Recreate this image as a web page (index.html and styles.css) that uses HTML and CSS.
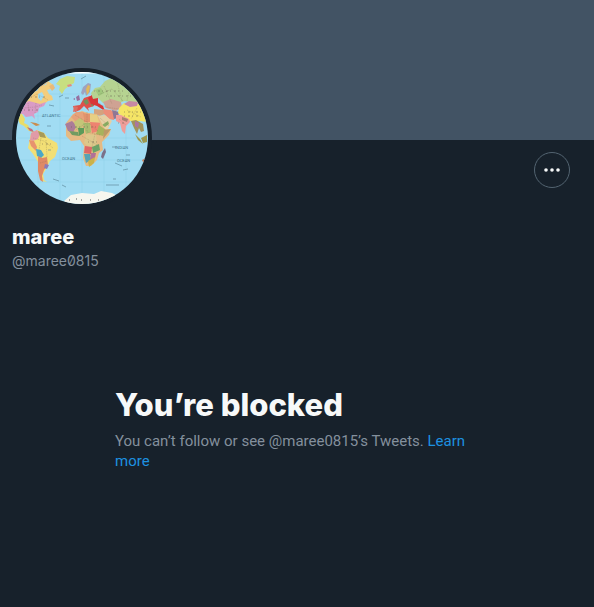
FILE: index.html
```html
<!DOCTYPE html>
<html lang="en">
  <head>
    <meta charset="UTF-8" />
    <meta name="viewport" content="width=device-width, initial-scale=1.0" />
    <title>maree (@maree0815)</title>
    <link rel="stylesheet" href="styles.css">
  </head>
  <body>
    <div class="banner"></div>

    <header class="profile">
      <div class="profile-top">
        <div class="avatar">
          <svg viewBox="0 0 132 132" role="img" aria-label="World map">
            <rect width="132" height="132" fill="#a1dcf3" />
            <!-- ocean grid -->
            <path d="M0 22H132M0 44H132M0 66H132M0 88H132M0 110H132M22 0V132M44 0V132M66 0V132M88 0V132M110 0V132" stroke="#8ccbe6" stroke-width=".4" fill="none" />
            <path d="M34 0H98" stroke="#fff" stroke-width="3" />
            <!-- north america -->
            <path d="M10 27l6-7 5-1 3-5 6-1 2-4 4 3-1 5-4 1 2 4 3 2 1 4-5 1-5 4-5 1-12-2z" fill="#f3cd7d" />
            <path d="M23 12l6-5 5-1-3 5-6 4zM33 14l4-2 2 4-3 3z" fill="#e9b978" />
            <path d="M22 22l4-2 2 4-3 5-3-3z" fill="#a1dcf3" />
            <path d="M6 32l7-3 11 3 6-2-2 4-5 2-1 4-4 2 1 5-3-3-6 1-3-3-5 1z" fill="#d99bc6" />
            <path d="M2 41l4 1 3 5-1 4 4 2 2 4 4 3-5-1-5-5-4-2-3-7z" fill="#e9dc68" />
            <path d="M11 55l5 2 2 3-4-1z" fill="#bf6e7d" />
            <path d="M14 50l6 1 4 2-4 1zM24 54l4 1" fill="#c98c4e" />
            <path d="M40 12l4-5 7-3 8 1-1 6-5 3-4 3-3 5-3-4 1-4z" fill="#c8df80" />
            <path d="M51 13l4-1 1 2-4 1z" fill="#df8c83" />
            <!-- south america -->
            <path d="M15 61l6-3 7 3 4 5 9 5 1 5-3 9-5 4-4 8-3 5 1 6 3 2-5-1-3-7-1-12-5-8-5-6z" fill="#f2df75" />
            <path d="M15 61l6-3 3 4-2 5-5 2-3-1z" fill="#e19aa7" />
            <path d="M22 59l6 2 2 5-6-1z" fill="#a79a59" />
            <path d="M13 68l5 1 3 6-1 4-5-5z" fill="#e7936e" />
            <path d="M20 77l5 1 3 5-3 3-4-2z" fill="#4ba7c6" />
            <path d="M22 84l4 2 5-1 1 8-4 5-2 6 1 6-3-2-2-9z" fill="#df8965" />
            <path d="M29 92l4 1-2 4-3-1z" fill="#8b79b4" />
            <!-- europe -->
            <path d="M57 34l7-1 4-7 6-2 5 3-1 7-6 2 1 3-5-5-4 4-5 2z" fill="#dd514b" />
            <path d="M58 34l4 1-1 4-4 1z" fill="#db6e65" />
            <path d="M60 25l3-2 1 5-3 1zM57 27l2-1v2z" fill="#9670a0" />
            <path d="M65 21l2-6 5-4 3 1-1 8-4 4-1-4-2 3z" fill="#9fa3be" />
            <path d="M70 17l2-4 2 1-1 6-2 3z" fill="#e0b85c" />
            <path d="M67 29l4-2 2 4-3 2zM74 29l5 1-3 5z" fill="#70915d" />
            <path d="M72 26l5-4 5 2v7l5 3 2 5-8-5-6-2z" fill="#d93437" />
            <!-- asia -->
            <path d="M75 21l4-5 5-1 5-6 9-4 9 5 10 7 9 9-3 6-14-3-7 2-10-2-5 2-5-5-5 1z" fill="#b6d391" />
            <path d="M79 18l6-2 3 5-5 3z" fill="#9fc87d" />
            <path d="M87 30l8-3 10 3 1 5-6 4-10-3z" fill="#cfa293" />
            <path d="M78 37l9 1 4 3-7 3-6-2z" fill="#d4a27e" />
            <path d="M87 37l8 1 4 3-1 7-5-1-5-5z" fill="#ec8e79" />
            <path d="M96 38l7 2-1 6-4 1z" fill="#8f7795" />
            <path d="M103 36l5-5 12 2 6-3 6 5v15l-9-1-10 0-7-5-4-3z" fill="#f5e566" />
            <path d="M108 32l5-3 9 1-1 4-7 1z" fill="#c789a4" />
            <path d="M82 44l7-1 7 6-4 8-5 2-4-8z" fill="#e6d0a3" />
            <path d="M86 53l6-4 1 3-4 3z" fill="#89ac62" />
            <path d="M100 43l5 0 8 4 1 3-4 4-1 8-3-3-2-8-4-2z" fill="#ef9d99" />
            <path d="M106 45l6 2-1 3-5-2z" fill="#a88070" />
            <path d="M115 49l5-1 7 4 1 7-3 1-2-4-2 6-3-6z" fill="#a1935d" />
            <path d="M119 49l4 2-1 5-3-2z" fill="#a976a1" />
            <path d="M119 62l5 5 3 5-5-4zM125 66l6-3v7l-4 1z" fill="#9c984f" />
            <!-- africa -->
            <path d="M50 51l7-9 9-3 6 2 9 1 4 8 4 7 6 0-2 6-7 7 1 8-4 3-2 7-6 6-5 0-3-8 1-12-4-6-9 1-5-5z" fill="#e5ba83" />
            <path d="M55 45l5-5 8 0-1 8-5 4z" fill="#e6a27b" />
            <path d="M49 52l7-3 5 5-4 6-5-1z" fill="#aa7c99" />
            <path d="M58 50l6-4 5 4-3 6-6 1z" fill="#c4c578" />
            <path d="M67 41l7 1 0 8-6 0z" fill="#e2936d" />
            <path d="M74 42l7 1 2 7-9 0z" fill="#e8cf83" />
            <path d="M74 50l10 1-1 8-7 2z" fill="#ee8370" />
            <path d="M67 51l7 0 1 9-5 2z" fill="#a9bd70" />
            <path d="M53 59l9 1 1 4-7-1z" fill="#719b61" />
            <path d="M62 56l6 0 0 5-5 3z" fill="#5c9b5a" />
            <path d="M83 53l7 5-3 6-7-2z" fill="#a8b35d" />
            <path d="M88 58l7-1-8 10z" fill="#bb9a66" />
            <path d="M70 62l10 1 1 10-7 3-6-5z" fill="#ddc88b" />
            <path d="M69 74l7 1-1 7-7-1z" fill="#dd6768" />
            <path d="M76 75l7-3 1 6-7 3z" fill="#6ca367" />
            <path d="M68 82l6 0 1 6-5 3z" fill="#58a3b5" />
            <path d="M75 81l5 0-1 5-5 2z" fill="#b27198" />
            <path d="M72 89l7-4-1 6-5 4z" fill="#cab349" />
            <path d="M86 81l3-5 1 4-3 7-2-2z" fill="#7b7189" />
            <path d="M126 88l4-2 2 3-3 5z" fill="#ca7b57" />
            <!-- antarctica -->
            <path d="M48 129l7-6 11-2 12 1 7-3 11 2 6 3-13 8H51z" fill="#f7f7ef" />
            <!-- borders and small place marks -->
            <path d="M12 27l9-5 11 6M7 36l12-1 7-2M12 31l1 9M20 31l-1 10M17 66l11 3 9 7M25 66l-2 12M30 68l1 17M24 91l7-2M59 43l15 9 8 7M57 60l13-9M71 40v20l13 3M66 64l17 10M79 62l-5 22M82 23l14-6 11 12M88 14l8 18M101 9l5 20M114 16l-3 13M77 27l12 8 14 2M111 38l14 7M121 36l-6 11M84 46l9 8M103 47l7 6" fill="none" stroke="#73694f" stroke-opacity=".45" stroke-width=".6" stroke-dasharray="1 .8" />
            <path d="M8 38h15M15 25h15M26 72h12M78 19h29M90 24h26M108 40h18M108 44h15M55 55h25M72 70h10M102 51h8" stroke="#5c5549" stroke-opacity=".6" stroke-width=".8" stroke-dasharray="1 3 2 2" />
            <path d="M31 54h4M43 25l4-2M32 78h3M37 107l6 2M46 113l4 2M99 91l7 3M107 98l5-1M97 107h3M90 113h13M33 33l5 1M49 26h4M65 7l5-3M96 75h4M110 83h4" stroke="#547e91" stroke-width=".6" />
            <path d="M53 128h1M60 127h1M65 128h1M74 128h1M82 128h1" stroke="#555" stroke-width="1" />
            <g class="map-label">
              <text x="26" y="45">ATLANTIC</text>
              <text x="46" y="88">OCEAN</text>
              <text x="99" y="77">INDIAN</text>
              <text x="101" y="90">OCEAN</text>
            </g>
          </svg>
        </div>
        <button class="btn-more" type="button" aria-label="More">
          <svg viewBox="0 0 20 20" width="20" height="20" aria-hidden="true">
            <circle cx="4" cy="10" r="1.8" />
            <circle cx="10" cy="10" r="1.8" />
            <circle cx="16" cy="10" r="1.8" />
          </svg>
        </button>
      </div>
      <h1 class="name">maree</h1>
      <div class="handle">@maree0815</div>
    </header>

    <main class="blocked">
      <h2>You’re blocked</h2>
      <p>You can’t follow or see @maree0815’s Tweets. <a href="#">Learn more</a></p>
    </main>
  </body>
</html>
```

FILE: styles.css
```css
* {
  box-sizing: border-box;
}
body {
  font-family: Roboto, "Liberation Sans", sans-serif;
  font-size: 15px;
  line-height: 20px;
  margin: 0;
  background-color: #17212b;
  color: #f7f9f9;
}
.banner {
  height: 140px;
  background-color: #425364;
}
.profile {
  padding: 12px 24px 0 12px;
}
.profile-top {
  display: flex;
  justify-content: space-between;
  align-items: flex-start;
}
.avatar {
  width: 140px;
  height: 140px;
  margin-top: -84px;
  border: 4px solid #17212b;
  border-radius: 50%;
  overflow: hidden;
  background-color: #17212b;
}
.avatar svg {
  display: block;
}
.map-label {
  font-size: 4px;
  fill: #42758e;
}
.btn-more {
  display: flex;
  align-items: center;
  justify-content: center;
  width: 36px;
  height: 36px;
  padding: 0;
  border: 1px solid #536471;
  border-radius: 50%;
  background-color: transparent;
  cursor: pointer;
}
.btn-more:hover {
  background-color: #27323c;
}
.btn-more svg {
  fill: #f7f9f9;
}
.name,
.handle,
.blocked h2 {
  font-family: Inter, Roboto, sans-serif;
}
.name,
.blocked h2 {
  font-weight: 800;
}
.name {
  margin: 17px 0 0;
  font-size: 20px;
  line-height: 24px;
}
.handle {
  margin-top: 2px;
  font-size: 14px;
  font-variant-numeric: slashed-zero;
  color: #84909d;
}
.blocked {
  max-width: 404px;
  margin: 116px auto 32px;
  padding: 0 24px 0 20px;
}
.blocked h2 {
  margin: 0 0 8px;
  font-size: 31px;
  line-height: 36px;
}
.blocked p {
  margin: 0;
  color: #84909d;
}
.blocked a {
  color: #1d91e0;
  text-decoration: none;
}
.blocked a:hover {
  text-decoration: underline;
}
```
